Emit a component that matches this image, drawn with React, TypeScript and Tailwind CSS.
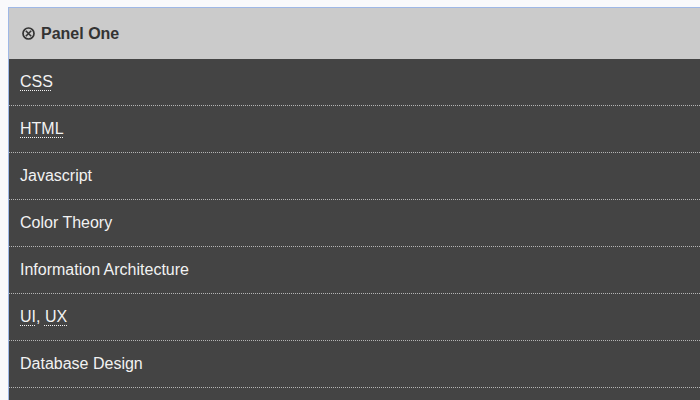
const items: { parts: { text: string; abbr?: string }[] }[] = [
  { parts: [{ text: "CSS", abbr: "Cascading Style Sheets" }] },
  { parts: [{ text: "HTML", abbr: "HyperText Markup Language" }] },
  { parts: [{ text: "Javascript" }] },
  { parts: [{ text: "Color Theory" }] },
  { parts: [{ text: "Information Architecture" }] },
  {
    parts: [
      { text: "UI", abbr: "User Interface" },
      { text: ", " },
      { text: "UX", abbr: "User Experience" },
    ],
  },
  { parts: [{ text: "Database Design" }] },
  { parts: [{ text: "Responsive Design" }] },
]

// circled-times toggle glyph
function CloseIcon() {
  return (
    <svg viewBox="0 0 13 13" className="mr-[6px] h-[13px] w-[13px]" fill="none" stroke="#333" strokeWidth="1.7">
      <circle cx="6.5" cy="6.5" r="5.5" />
      <path d="M3.8 3.8 9.2 9.2M9.2 3.8 3.8 9.2" strokeWidth="1.6" />
    </svg>
  )
}

export default function App() {
  return (
    <div
      className="h-[400px] overflow-hidden bg-[#f9f9fb] pl-2 pt-[7px]"
      style={{ fontFamily: '"Liberation Sans", Arial, sans-serif' }}
    >
      <div className="border-t border-l border-[#9fb8e6] bg-[#444]">
        <div className="flex h-[51px] items-center bg-[#cbcbcb] pl-[13px] pr-3 text-base font-bold text-[#333]">
          <CloseIcon />
          Panel One
        </div>
        <ul>
          {items.map((item, i) => (
            <li
              key={i}
              className="flex h-[47px] items-center border-b border-dotted border-[#b5b5b5] px-[11px] text-base text-[#f2f2f2]"
            >
              {item.parts.map((p, j) =>
                p.abbr ? (
                  <abbr
                    key={j}
                    title={p.abbr}
                    className="underline decoration-dotted decoration-1 underline-offset-[3px]"
                  >
                    {p.text}
                  </abbr>
                ) : (
                  <span key={j} className="whitespace-pre">
                    {p.text}
                  </span>
                )
              )}
            </li>
          ))}
        </ul>
      </div>
    </div>
  )
}
